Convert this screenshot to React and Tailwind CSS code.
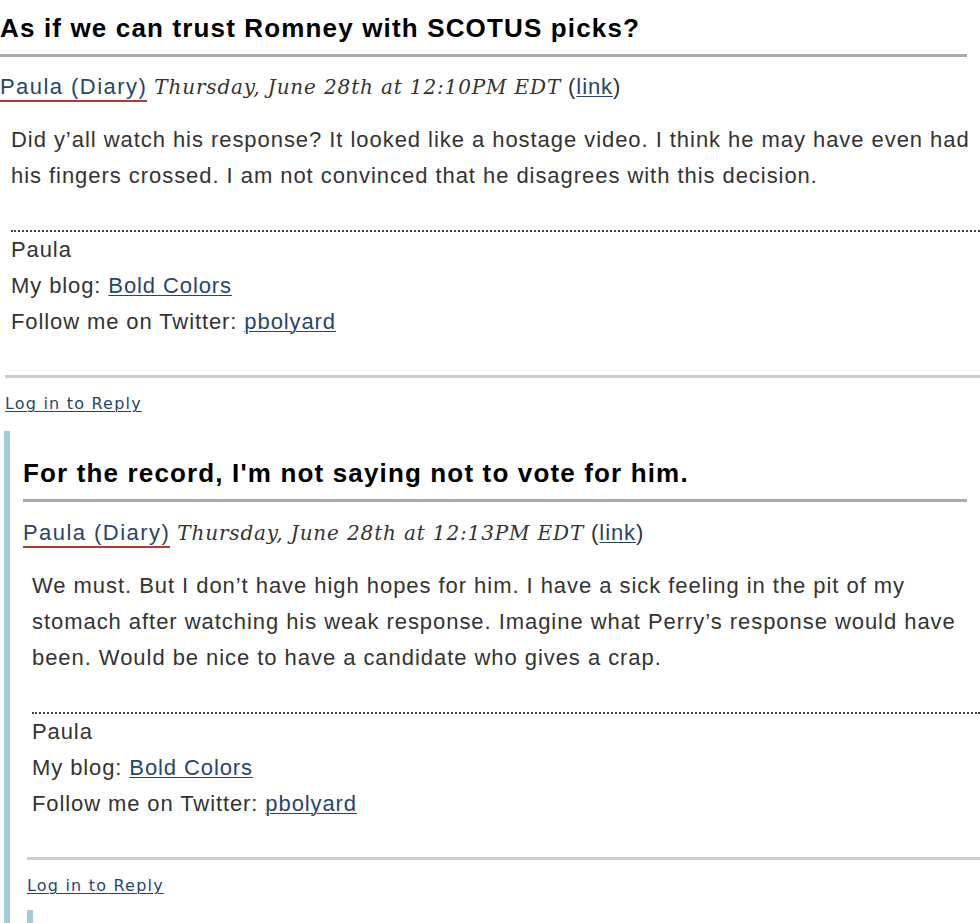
import React from "react";

const sans = { fontFamily: '"Liberation Sans", Arial, sans-serif' };
const serif = { fontFamily: '"DejaVu Serif", Georgia, serif' };
const wide = { fontFamily: '"DejaVu Sans", Verdana, sans-serif' };

function Comment({ title, time, lines, indent, replyIndent, bylineGap, children }) {
  return (
    <div>
      <h2 className="mr-[13px] border-b-[3px] border-[#aaaaaa] pt-[14px] pb-[12px] text-[26px] font-bold leading-[28px] tracking-[1.15px] whitespace-nowrap text-black">
        {title}
      </h2>
      <div
        className="whitespace-nowrap text-[22px] leading-[28px] tracking-[0.9px] text-[#333]"
        style={{ marginTop: bylineGap }}
      >
        <a className="border-b-2 border-[#b23a2e] pb-[1px] tracking-[1.45px] text-[#27466a]">Paula (Diary)</a>{" "}
        <span className="text-[20px] italic tracking-[0.85px] text-[#333]" style={serif}>
          {time}
        </span>{" "}
        (<a className="text-[#27466a] underline decoration-1 underline-offset-2">link</a>)
      </div>
      <div
        className="mt-[21px] whitespace-nowrap text-[22px] leading-[36px] tracking-[0.95px] text-[#333]"
        style={{ paddingLeft: indent }}
      >
        {lines.map((l, i) => (
          <div key={i}>{l}</div>
        ))}
      </div>
      <div className="mt-[36px] border-t-2 border-dotted border-[#444]" style={{ marginLeft: indent }} />
      <div
        className="whitespace-nowrap text-[22px] leading-[36px] tracking-[0.9px] text-[#333]"
        style={{ paddingLeft: indent }}
      >
        <div>Paula</div>
        <div>
          My blog: <a className="text-[#27466a] underline decoration-1 underline-offset-2">Bold Colors</a>
        </div>
        <div>
          Follow me on Twitter:{" "}
          <a className="text-[#27466a] underline decoration-1 underline-offset-2">pbolyard</a>
        </div>
      </div>
      <div className="mt-[35px] border-t-[3px] border-[#cccccc]" style={{ marginLeft: replyIndent }} />
      <div
        className="mt-[16px] text-[16px] leading-[20px] tracking-[1.2px]"
        style={{ ...wide, marginLeft: replyIndent }}
      >
        <a className="text-[#27466a] underline decoration-1 underline-offset-2">Log in to Reply</a>
      </div>
      {children}
    </div>
  );
}

export default function App() {
  return (
    <div className="h-[923px] w-[980px] overflow-hidden bg-white" style={sans}>
      <Comment
        title="As if we can trust Romney with SCOTUS picks?"
        time="Thursday, June 28th at 12:10PM EDT"
        indent={11}
        replyIndent={5}
        bylineGap={16}
        lines={[
          "Did y’all watch his response? It looked like a hostage video. I think he may have even had",
          "his fingers crossed. I am not convinced that he disagrees with this decision.",
        ]}
      >
        <div className="ml-[4px] mt-[17px] border-l-[6px] border-[#a7cad7] pl-[13px]">
          <div className="pt-[14px]">
            <Comment
              title="For the record, I'm not saying not to vote for him."
              time="Thursday, June 28th at 12:13PM EDT"
              indent={9}
              replyIndent={4}
              bylineGap={17}
              lines={[
                "We must. But I don’t have high hopes for him. I have a sick feeling in the pit of my",
                "stomach after watching his weak response. Imagine what Perry’s response would have",
                "been. Would be nice to have a candidate who gives a crap.",
              ]}
            >
              <div className="ml-[4px] mt-[14px] h-[40px] border-l-[6px] border-[#a7cad7]" />
            </Comment>
          </div>
        </div>
      </Comment>
    </div>
  );
}
